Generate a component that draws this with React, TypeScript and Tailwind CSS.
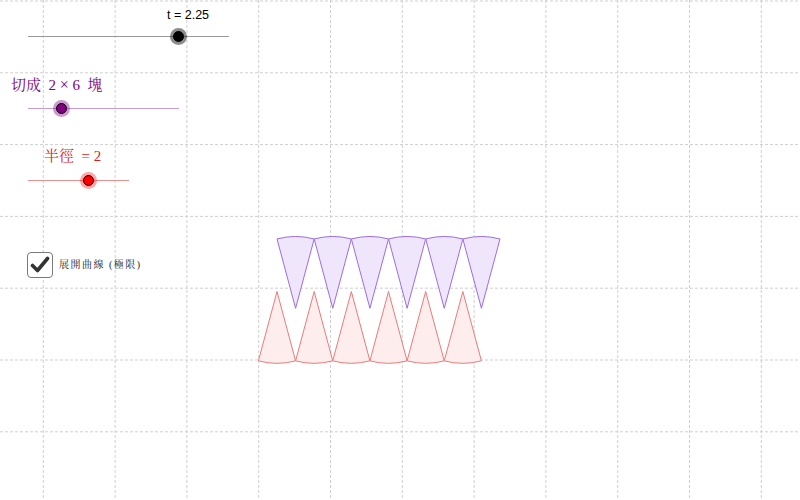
import React from 'react'

const UNIT = 71.8
const GX = 43.3
const GY = 1
const HALF_W = UNIT * Math.sin(Math.PI / 12)
const DEPTH = UNIT * Math.cos(Math.PI / 12)

function Grid() {
  const xs = Array.from({ length: 11 }, (_, i) => GX + i * UNIT)
  const ys = Array.from({ length: 7 }, (_, i) => GY + i * UNIT)
  return (
    <g stroke="#cfcfcf" strokeWidth={1} strokeDasharray="3 2">
      {xs.map(x => <line key={'x' + x} x1={x} y1={0} x2={x} y2={500} />)}
      {ys.map(y => <line key={'y' + y} x1={0} y1={y} x2={800} y2={y} />)}
    </g>
  )
}

function Sectors() {
  const purple = Array.from({ length: 6 }, (_, i) => 295.6 + i * 2 * HALF_W)
  const red = Array.from({ length: 6 }, (_, i) => 277 + i * 2 * HALF_W)
  return (
    <g strokeWidth={1}>
      {purple.map(x => {
        const y = 308.3
        return (
          <path
            key={'p' + x}
            d={`M${x} ${y} L${x - HALF_W} ${y - DEPTH} A${UNIT} ${UNIT} 0 0 1 ${x + HALF_W} ${y - DEPTH} Z`}
            fill="#efe6fb"
            stroke="#9a6ee0"
          />
        )
      })}
      {red.map(x => {
        const y = 291.5
        return (
          <path
            key={'r' + x}
            d={`M${x} ${y} L${x + HALF_W} ${y + DEPTH} A${UNIT} ${UNIT} 0 0 1 ${x - HALF_W} ${y + DEPTH} Z`}
            fill="#fdeded"
            stroke="#ea7b7b"
          />
        )
      })}
    </g>
  )
}

interface SliderProps {
  pos: number
  className: string
  knobClass: string
  haloClass: string
}

// track with a knob at pos (0..1)
function Slider({ pos, className, knobClass, haloClass }: SliderProps) {
  return (
    <div className={`relative h-px ${className}`}>
      <div
        className={`absolute top-[-8px] -ml-[8.5px] w-[17px] h-[17px] rounded-full flex items-center justify-center ${haloClass}`}
        style={{ left: `${pos * 100}%` }}
      >
        <div className={`w-[11px] h-[11px] rounded-full border border-black ${knobClass}`} />
      </div>
    </div>
  )
}

export default function App() {
  return (
    <div className="relative w-[800px] h-[500px] bg-white overflow-hidden">
      <svg className="absolute inset-0" width={800} height={500}>
        <Grid />
        <Sectors />
      </svg>

      {/* controls */}
      <div className="relative flex flex-col pt-[9px] font-['Liberation_Serif','Noto_Serif_CJK_TC','Noto_Sans_CJK_TC',serif]">
        <div className="flex flex-col">
          <div className="pl-[167px] h-[27px] text-[12.5px] leading-none text-black font-['Liberation_Sans',Arial,sans-serif]">
            t = 2.25
          </div>
          <div className="pl-[28px]">
            <Slider pos={0.75} className="w-[201px] bg-[#9b9b9b]" knobClass="bg-black" haloClass="bg-black/45" />
          </div>
        </div>

        <div className="flex flex-col mt-[40px]">
          <div className="pl-[11px] h-[31px] text-[15px] leading-none text-[#800080] whitespace-pre">
            切成  2 <span className="text-[16px]">×</span> 6  塊
          </div>
          <div className="pl-[28px]">
            <Slider pos={0.223} className="w-[151px] bg-[#c69bd6]" knobClass="bg-[#800080]" haloClass="bg-[#800080]/40" />
          </div>
        </div>

        <div className="flex flex-col mt-[40px]">
          <div className="pl-[44px] h-[31px] text-[15px] leading-none text-[#e01b1b] whitespace-pre">
            半徑  = 2
          </div>
          <div className="pl-[28px]">
            <Slider pos={0.6} className="w-[101px] bg-[#ec8f8f]" knobClass="bg-[#ff0000]" haloClass="bg-[#ff0000]/35" />
          </div>
        </div>

        <label className="flex items-center gap-[6px] pl-[27px] mt-[71px]">
          <span className="w-[26px] h-[26px] rounded-[4px] border-[1.5px] border-[#7a7a7a] bg-white flex items-center justify-center">
            <svg width="20" height="18" viewBox="0 0 20 18">
              <path d="M2.5 9.5 L7.5 14.5 L17.5 2.5" fill="none" stroke="#333" strokeWidth="3.6" strokeLinecap="round" strokeLinejoin="round" />
            </svg>
          </span>
          <span className="text-[10px] tracking-[1.5px] text-[#222] leading-none">展開曲線 (極限)</span>
        </label>
      </div>
    </div>
  )
}
